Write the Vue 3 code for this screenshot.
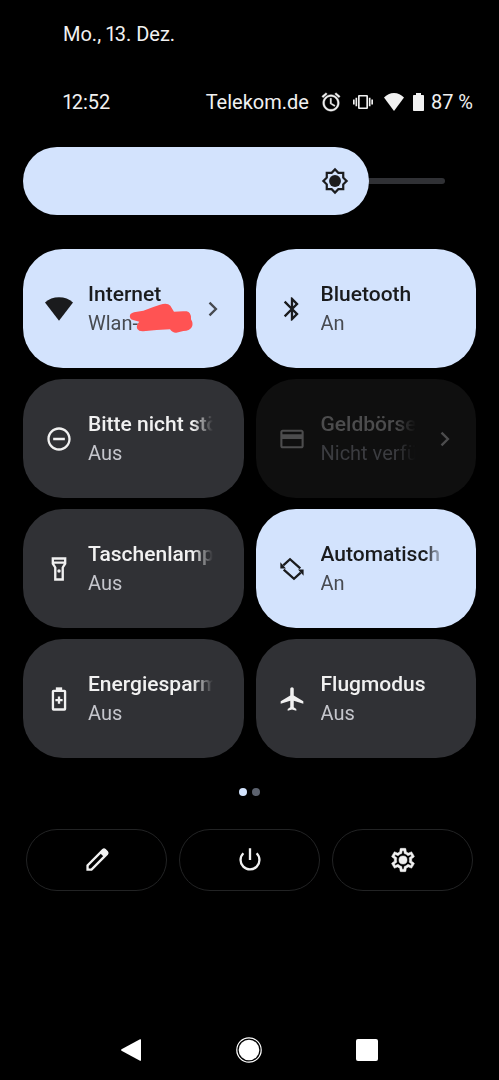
<script setup>
import { ref, computed } from 'vue'

const brightness = ref(82)
const fillWidth = computed(() => `${brightness.value}%`)
const page = ref(0)

const tiles = ref([
  { id: 'internet', title: 'Internet', state: 'Wlan-', kind: 'on', more: true, scribble: true },
  { id: 'bluetooth', title: 'Bluetooth', state: 'An', kind: 'on' },
  { id: 'dnd', title: 'Bitte nicht stören', state: 'Aus', kind: 'off' },
  { id: 'wallet', title: 'Geldbörse', state: 'Nicht verfügbar', kind: 'disabled', more: true },
  { id: 'torch', title: 'Taschenlampe', state: 'Aus', kind: 'off' },
  { id: 'rotate', title: 'Automatisch drehen', state: 'An', kind: 'on' },
  { id: 'saver', title: 'Energiesparmodus', state: 'Aus', kind: 'off' },
  { id: 'flight', title: 'Flugmodus', state: 'Aus', kind: 'off' },
])

function toggle(tile) {
  if (tile.more) return
  tile.kind = tile.kind === 'on' ? 'off' : 'on'
  tile.state = tile.kind === 'on' ? 'An' : 'Aus'
}
</script>

<template>
  <div class="shade">
    <header>
      <div class="date">Mo., 13. Dez.</div>
      <div class="status">
        <span class="clock">12:52</span>
        <span class="carrier">Telekom.de</span>
        <svg class="s-alarm" viewBox="0 0 24 24" aria-hidden="true"><path d="M22 5.72l-4.6-3.86-1.29 1.53 4.6 3.86L22 5.72zM7.88 3.39L6.6 1.86 2 5.71l1.29 1.53 4.59-3.85zM12.5 8H11v6l4.75 2.85.75-1.23-4-2.37V8zM12 4c-4.97 0-9 4.03-9 9s4.02 9 9 9c4.97 0 9-4.03 9-9s-4.03-9-9-9zm0 16c-3.87 0-7-3.13-7-7s3.13-7 7-7 7 3.13 7 7-3.13 7-7 7z" /></svg>
        <svg class="s-vib" viewBox="0 0 24 24" aria-hidden="true"><path d="M0 15h2V9H0v6zm3 2h2V7H3v10zm19-8v6h2V9h-2zm-3 8h2V7h-2v10zM16.5 3.5h-9C6.67 3.5 6 4.1 6 5v14c0 .83.67 1.5 1.5 1.5h9c.83 0 1.5-.67 1.5-1.5V5c0-.83-.67-1.5-1.5-1.5zM16 18.5H8v-13h8v13z" /></svg>
        <svg class="s-wifi" viewBox="0 0 20 18" aria-hidden="true"><path d="M10 18L0 4.6C2.6 1.8 6.2 0 10 0s7.4 1.8 10 4.600z" /></svg>
        <svg class="s-batt" viewBox="0 0 11 18" aria-hidden="true"><path d="M3 0h5v2h2.200q.8 0 .8.800v14.400q0 .8-.8.800H.8q-.8 0-.8-.8V2.800Q0 2 .8 2H3z" /></svg>
        <span class="percent">87 %</span>
      </div>
    </header>

    <div class="brightness">
      <div class="track"></div>
      <div class="fill" :style="{ width: fillWidth }">
        <svg class="icon" viewBox="0 0 24 24" aria-hidden="true"><path d="M20 8.690V4h-4.690L12 .69 8.690 4H4v4.690L.69 12 4 15.310V20h4.690L12 23.310 15.310 20H20v-4.690L23.310 12 20 8.690zm-1.900 5.800v3.610h-3.610L12 20.600 9.510 18.100H5.900v-3.610L3.400 12 5.900 9.510V5.900h3.610L12 3.400 14.490 5.900h3.610v3.610L20.600 12z" /><circle cx="12" cy="12" r="5.100" /></svg>
      </div>
      <input v-model="brightness" type="range" min="20" max="100" aria-label="Helligkeit" />
    </div>

    <main class="tiles">
      <button
        v-for="tile in tiles"
        :key="tile.id"
        type="button"
        class="tile"
        :class="[tile.kind, { more: tile.more }]"
        :disabled="tile.kind === 'disabled'"
        @click="toggle(tile)"
      >
        <svg class="icon" viewBox="0 0 24 24" aria-hidden="true">
          <path v-if="tile.id === 'internet'" d="M12 22L0 6.400C3.100 3.500 7.400 2 12 2s8.900 1.500 12 4.400z" />
          <path v-else-if="tile.id === 'bluetooth'" d="M17.710 7.710L12 2h-1v7.590L6.410 5 5 6.410 10.590 12 5 17.590 6.410 19 11 14.410V22h1l5.710-5.710-4.300-4.290 4.300-4.290zM13 5.830l1.880 1.880L13 9.590V5.830zm1.880 10.460L13 18.170v-3.760l1.880 1.880z" />
          <path v-else-if="tile.id === 'dnd'" d="M7 11h10v2H7zM12 2C6.480 2 2 6.480 2 12s4.480 10 10 10 10-4.480 10-10S17.520 2 12 2zm0 18c-4.420 0-8-3.580-8-8s3.580-8 8-8 8 3.580 8 8-3.580 8-8 8z" />
          <path v-else-if="tile.id === 'wallet'" d="M20 4H4c-1.110 0-2 .89-2 2v12c0 1.110.89 2 2 2h16c1.110 0 2-.89 2-2V6c0-1.110-.89-2-2-2zm.2 14.200H3.800V12h16.400zm0-10.200H3.800V5.800h16.400z" />
          <g v-else-if="tile.id === 'torch'">
            <path class="line" d="M6.700 3h10.600v4.500l-2.100 3.200V21H8.800V10.700L6.700 7.500zM6.700 6.600h10.600" />
            <circle cx="12" cy="13.700" r="1.500" />
          </g>
          <g v-else-if="tile.id === 'rotate'">
            <path class="line" d="M4.500 8.900l5.800-5.300 8.800 7.900M19.500 15.100l-5.800 5.300-8.800-7.900" />
            <path d="M.8 6.300v5.300h5.400zM23.200 17.700v-5.300h-5.400z" transform="translate(1.300 0) scale(.89 1)" />
          </g>
          <g v-else-if="tile.id === 'saver'">
            <path d="M9.300 2h5.400v2.500H9.300z" />
            <rect class="line" x="6.800" y="5" width="10.400" height="16" rx=".5" />
            <path class="line" d="M12 9.900v6.200M8.900 13h6.200" />
          </g>
          <path v-else d="M21.700 16v-2l-8.200-5V3.500c0-.83-.67-1.500-1.500-1.500s-1.500.67-1.500 1.500V9l-8.200 5v2l8.200-2.500V19l-2.200 1.500V22l3.700-1 3.700 1v-1.500L13.500 19v-5.500l8.200 2.500z" />
        </svg>
        <span class="label">
          <span class="title">{{ tile.title }}</span>
          <span class="state">{{ tile.state }}</span>
        </span>
        <svg v-if="tile.more" class="icon" viewBox="0 0 24 24" aria-hidden="true"><path class="line chevron" d="M9 6.500l5.500 5.500L9 17.500" /></svg>
        <svg v-if="tile.scribble" class="scribble" viewBox="357 189 195 90" aria-hidden="true"><path d="M360 232Q357 221 372 217L400 212Q428 201 450 194Q472 187 481 197L492 215Q515 213 530 214Q544 217 543 238Q551 251 545 262Q539 273 520 273L499 278Q488 279 480 268L440 270L400 274Q387 275 382 267Q377 255 388 245L372 241Q361 239 360 232Z" /></svg>
      </button>
    </main>

    <div class="pages">
      <button v-for="n in 2" :key="n" type="button" :class="{ current: page === n - 1 }" :aria-label="`Seite ${n}`" @click="page = n - 1"></button>
    </div>

    <div class="actions">
      <button type="button" aria-label="Bearbeiten">
        <svg class="icon" viewBox="0 0 24 24"><path class="line" d="M3.900 20.200v-3.500L17.200 3.400q.8-.7 1.600 0l1.800 1.800q.7.8 0 1.600L7.300 20.200z" /><path d="M14.600 6l3.400 3.400 3-3V5l-2-2h-1.400z" /></svg>
      </button>
      <button type="button" aria-label="Ein/Aus">
        <svg class="icon" viewBox="0 0 24 24"><path class="line" d="M12 2v10M6.300 6.200a8.100 8.100 0 1 0 11.400 0" /></svg>
      </button>
      <button type="button" aria-label="Einstellungen">
        <svg class="icon gear" viewBox="0 0 24 24"><path d="M19.430 12.980c.04-.32.07-.64.07-.98 0-.34-.03-.66-.07-.98l2.110-1.650c.19-.15.24-.42.12-.64l-2-3.460c-.09-.16-.26-.25-.44-.25-.06 0-.12.01-.17.03l-2.490 1c-.52-.4-1.080-.73-1.690-.98l-.38-2.650C14.460 2.180 14.250 2 14 2h-4c-.25 0-.46.18-.49.42l-.38 2.650c-.61.25-1.170.59-1.690.98l-2.490-1c-.06-.02-.12-.03-.18-.03-.17 0-.34.09-.43.25l-2 3.460c-.13.22-.07.49.12.64l2.110 1.650c-.04.32-.07.65-.07.98 0 .33.03.66.07.98l-2.110 1.650c-.19.15-.24.42-.12.64l2 3.460c.09.16.26.25.44.25.06 0 .12-.01.17-.03l2.490-1c.52.4 1.080.73 1.690.98l.38 2.650c.03.24.24.42.49.42h4c.25 0 .46-.18.49-.42l.38-2.650c.61-.25 1.170-.59 1.690-.98l2.490 1c.06.02.12.03.18.03.17 0 .34-.09.43-.25l2-3.460c.12-.22.07-.49-.12-.64l-2.110-1.650zm-1.980-1.710c.04.31.05.52.05.73 0 .21-.02.43-.05.73l-.14 1.130.89.7 1.080.84-.7 1.210-1.270-.51-1.040-.42-.9.68c-.43.32-.84.56-1.250.73l-1.060.43-.16 1.130-.2 1.350h-1.400l-.19-1.350-.16-1.130-1.060-.43c-.43-.18-.83-.41-1.230-.71l-.91-.7-1.060.43-1.270.51-.7-1.210 1.080-.84.89-.7-.14-1.130c-.03-.31-.05-.54-.05-.74s.02-.43.05-.73l.14-1.130-.89-.7-1.080-.84.7-1.210 1.270.51 1.040.42.9-.68c.43-.32.84-.56 1.250-.73l1.060-.43.16-1.130.2-1.350h1.390l.19 1.350.16 1.130 1.060.43c.43.18.83.41 1.230.71l.91.7 1.060-.43 1.270-.51.7 1.210-1.070.85-.89.7.14 1.130z" /><circle cx="12" cy="12" r="3.500" /></svg>
      </button>
    </div>

    <nav aria-label="System">
      <button type="button" aria-label="Zurück"><svg viewBox="0 0 28 28"><path d="M24 3.800v20.400q0 1-1 .5L4.500 14.800q-1-.8 0-1.600L23 3.300q1-.5 1 .5z" /></svg></button>
      <button type="button" aria-label="Startbildschirm"><svg viewBox="0 0 28 28"><circle class="ring" cx="14" cy="14" r="12.200" /><circle cx="14" cy="14" r="10.300" /></svg></button>
      <button type="button" aria-label="Übersicht"><svg viewBox="0 0 28 28"><rect x="3" y="3" width="22" height="22" rx="2" /></svg></button>
    </nav>
  </div>
</template>

<style>
body {
  margin: 0;
  background: #000;
}
</style>

<style scoped>
.shade {
  box-sizing: border-box;
  min-height: 100vh;
  display: flex;
  flex-direction: column;
  background: #000;
  color: #f1f1f1;
  font-family: Roboto, "Liberation Sans", sans-serif;
  font-size: 20px;
  line-height: 28px;
}
button {
  font: inherit;
  color: inherit;
  background: none;
  border: 0;
  padding: 0;
  margin: 0;
}
svg {
  display: block;
  flex: none;
  fill: currentColor;
}
.icon {
  width: 28px;
  height: 28px;
}
.line {
  fill: none;
  stroke: currentColor;
  stroke-width: 2;
}
.gear {
  stroke: currentColor;
  stroke-width: 0.4;
}
header {
  padding: 20px 26px 0 63px;
}
.date,
.clock {
  font-variant-numeric: proportional-nums;
}
.status {
  display: flex;
  align-items: center;
  margin-top: 40px;
}
.carrier {
  margin-left: auto;
}
.s-alarm {
  width: 22px;
  height: 22px;
  margin-left: 11px;
  stroke: currentColor;
  stroke-width: 0.4;
}
.s-vib {
  width: 20px;
  height: 20px;
  margin-left: 11px;
}
.s-wifi {
  width: 20px;
  height: 18px;
  margin-left: 11px;
}
.s-batt {
  width: 11px;
  height: 18px;
  margin: 0 7px 0 9px;
}
.brightness {
  position: relative;
  height: 68px;
  margin: 31px 54px 0 23px;
  display: flex;
  align-items: center;
}
.track {
  position: absolute;
  left: 34px;
  right: 0;
  height: 6px;
  border-radius: 3px;
  background: #303135;
}
.fill {
  position: relative;
  box-sizing: border-box;
  height: 100%;
  padding-right: 20px;
  border-radius: 34px;
  background: #d3e3fd;
  color: #1c1d1f;
  display: flex;
  align-items: center;
  justify-content: flex-end;
}
.brightness input {
  position: absolute;
  inset: 0;
  width: 100%;
  height: 100%;
  margin: 0;
  opacity: 0;
}
.tiles {
  display: grid;
  grid-template-columns: 1fr 1fr;
  gap: 11px 12px;
  padding: 34px 23px 0;
}
.tile {
  position: relative;
  min-width: 0;
  height: 119px;
  padding: 0 31px 0 22px;
  border-radius: 40px;
  display: flex;
  align-items: center;
  gap: 15px;
  text-align: left;
}
.tile.more {
  padding-right: 17px;
}
.label {
  flex: 1;
  min-width: 0;
  line-height: 29px;
  overflow: hidden;
  white-space: nowrap;
  mask-image: linear-gradient(to right, #000 calc(100% - 20px), transparent);
}
.title,
.state {
  display: block;
}
.title {
  font-size: 21px;
  font-weight: 500;
}
.on {
  background: #d3e3fd;
  color: #1a1b1d;
}
.on .state,
.on .chevron {
  color: #474a50;
}
.off {
  background: #303135;
}
.off .state {
  color: #c5c6cc;
}
.disabled {
  background: #0f0f0f;
  color: #4c4c4d;
}
.disabled .state {
  color: #3b3c40;
}
.scribble {
  position: absolute;
  left: 106px;
  top: 54px;
  width: 65px;
  height: 30px;
  fill: #ff5353;
}
.pages {
  display: flex;
  justify-content: center;
  gap: 5px;
  padding-top: 30px;
}
.pages button {
  width: 8px;
  height: 8px;
  border-radius: 50%;
  background: #5c626e;
}
.pages .current {
  background: #d3e3fd;
}
.actions {
  display: grid;
  grid-template-columns: repeat(3, 1fr);
  gap: 12px;
  padding: 33px 26px 0;
}
.actions button {
  height: 62px;
  border: 1px solid #222324;
  border-radius: 31px;
  display: flex;
  align-items: center;
  justify-content: center;
}
nav {
  margin-top: auto;
  padding: 0 73px 16px 72px;
  display: grid;
  grid-template-columns: repeat(3, 1fr);
  justify-items: center;
  color: #fff;
}
nav svg {
  width: 28px;
  height: 28px;
}
.ring {
  fill: none;
  stroke: currentColor;
  stroke-width: 1.2;
}
</style>
